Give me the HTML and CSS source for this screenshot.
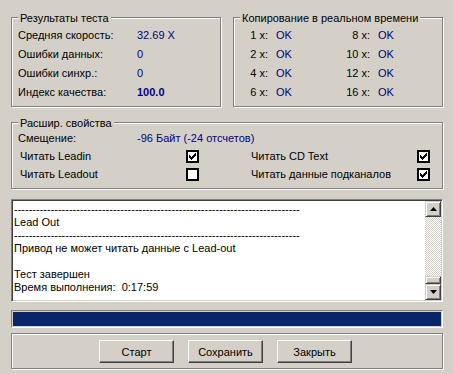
FILE: index.html
```html
<!DOCTYPE html>
<html lang="ru">
<head>
  <meta charset="UTF-8" />
  <title>Тест чтения</title>
  <link rel="stylesheet" href="styles.css">
</head>
<body>

<div class="dialog">
  <div class="top-row">
    <div class="group results">
      <div class="group-title">Результаты теста</div>
      <div class="result-grid">
        <span>Средняя скорость:</span><span class="value">32.69 X</span>
        <span>Ошибки данных:</span><span class="value">0</span>
        <span>Ошибки синхр.:</span><span class="value">0</span>
        <span>Индекс качества:</span><span class="value bold">100.0</span>
      </div>
    </div>

    <div class="group realtime">
      <div class="group-title">Копирование в реальном времени</div>
      <div class="speed-grid">
        <span class="speed">1 x:</span><span class="value">OK</span><span class="speed">8 x:</span><span class="value">OK</span>
        <span class="speed">2 x:</span><span class="value">OK</span><span class="speed">10 x:</span><span class="value">OK</span>
        <span class="speed">4 x:</span><span class="value">OK</span><span class="speed">12 x:</span><span class="value">OK</span>
        <span class="speed">6 x:</span><span class="value">OK</span><span class="speed">16 x:</span><span class="value">OK</span>
      </div>
    </div>
  </div>

  <div class="group extended">
    <div class="group-title">Расшир. свойства</div>
    <div class="offset-row">
      <span>Смещение:</span><span class="value">-96 Байт (-24 отсчетов)</span>
    </div>
    <div class="option-grid">
      <span>Читать Leadin</span>
      <svg class="check" width="13" height="13" viewBox="0 0 13 13" shape-rendering="crispEdges"><rect x="1" y="1" width="11" height="11" fill="#fff" stroke="#000" stroke-width="2"/><path d="M9 3h1v1h-1zM8 4h2v1h-2zM3 5h1v1h-1zM7 5h3v1h-3zM3 6h2v1h-2zM6 6h3v1h-3zM3 7h5v1h-5zM4 8h3v1h-3zM5 9h1v1h-1z"/></svg>
      <span>Читать CD Text</span>
      <svg class="check" width="13" height="13" viewBox="0 0 13 13" shape-rendering="crispEdges"><rect x="1" y="1" width="11" height="11" fill="#fff" stroke="#000" stroke-width="2"/><path d="M9 3h1v1h-1zM8 4h2v1h-2zM3 5h1v1h-1zM7 5h3v1h-3zM3 6h2v1h-2zM6 6h3v1h-3zM3 7h5v1h-5zM4 8h3v1h-3zM5 9h1v1h-1z"/></svg>

      <span>Читать Leadout</span>
      <svg class="check" width="13" height="13" viewBox="0 0 13 13" shape-rendering="crispEdges"><rect x="1" y="1" width="11" height="11" fill="#fff" stroke="#000" stroke-width="2"/></svg>
      <span>Читать данные подканалов</span>
      <svg class="check" width="13" height="13" viewBox="0 0 13 13" shape-rendering="crispEdges"><rect x="1" y="1" width="11" height="11" fill="#fff" stroke="#000" stroke-width="2"/><path d="M9 3h1v1h-1zM8 4h2v1h-2zM3 5h1v1h-1zM7 5h3v1h-3zM3 6h2v1h-2zM6 6h3v1h-3zM3 7h5v1h-5zM4 8h3v1h-3zM5 9h1v1h-1z"/></svg>
    </div>
  </div>

  <div class="log">
    <div class="log-text">------------------------------------------------------------------------------
Lead Out
------------------------------------------------------------------------------
Привод не может читать данные с Lead-out

Тест завершен
Время выполнения:  0:17:59</div>
    <div class="scrollbar">
      <div class="sb-btn"><svg width="7" height="4" viewBox="0 0 7 4"><polygon points="3.5,0 7,4 0,4"/></svg></div>
      <div class="sb-track"></div>
      <div class="sb-thumb"></div>
      <div class="sb-btn"><svg width="7" height="4" viewBox="0 0 7 4"><polygon points="0,0 7,0 3.5,4"/></svg></div>
    </div>
  </div>

  <div class="progress"><div class="progress-fill"></div></div>

  <div class="group buttons">
    <button>Старт</button>
    <button>Сохранить</button>
    <button>Закрыть</button>
  </div>
</div>

</body>
</html>
```

FILE: styles.css
```css
* {
  box-sizing: border-box;
}

body {
  margin: 0;
  background: #d4d0c8;
  font-family: "Liberation Sans", Arial, sans-serif;
  font-size: 11px;
  color: #000;
}

.dialog {
  width: 453px;
  height: 374px;
  padding: 17px 10px 0 11px;
  display: flex;
  flex-direction: column;
}

.top-row {
  display: flex;
  justify-content: space-between;
}

/* etched group box */
.group {
  position: relative;
  border: 1px solid #808080;
  box-shadow: inset 1px 1px #fff, 1px 1px #fff;
}

.group-title {
  position: absolute;
  top: -6px;
  left: 6px;
  padding: 0 2px;
  line-height: 13px;
  background: #d4d0c8;
  white-space: nowrap;
}

.value {
  color: #000080;
}

.bold {
  font-weight: bold;
}

.results,
.realtime {
  width: 210px;
  height: 90px;
  padding-top: 7px;
}

.result-grid {
  display: grid;
  grid-template-columns: 119px auto;
  grid-auto-rows: 19px;
  align-items: center;
  padding-left: 6px;
}

.speed-grid {
  display: grid;
  grid-template-columns: 42px 50px 52px auto;
  grid-auto-rows: 19px;
  align-items: center;
}

.speed {
  text-align: right;
  padding-right: 8px;
}

.extended {
  margin-top: 15px;
  height: 67px;
  padding: 5px 0 0 6px;
}

.offset-row {
  display: grid;
  grid-template-columns: 119px auto;
  height: 19px;
  align-items: center;
}

.option-grid {
  display: grid;
  grid-template-columns: 166px 65px 166px 13px;
  grid-auto-rows: 18px;
  align-items: center;
  padding-left: 2px;
}

.check {
  display: block;
}

/* sunken text box */
.log {
  margin-top: 10px;
  height: 103px;
  display: flex;
  padding: 1px;
  background: #fff;
  border: 1px solid;
  border-color: #808080 #fff #fff #808080;
  box-shadow: inset 1px 1px #404040, inset -1px -1px #d4d0c8;
}

.log-text {
  flex: 1;
  padding: 2px 0 0 1px;
  line-height: 13px;
  white-space: pre;
  overflow: hidden;
}

.scrollbar {
  width: 16px;
  display: flex;
  flex-direction: column;
}

.sb-btn,
.sb-thumb {
  background: #d4d0c8;
  border: 1px solid;
  border-color: #d4d0c8 #404040 #404040 #d4d0c8;
  box-shadow: inset 1px 1px #fff, inset -1px -1px #808080;
}

.sb-btn {
  height: 16px;
  display: flex;
  align-items: center;
  justify-content: center;
}

.sb-btn svg {
  display: block;
}

.sb-thumb {
  height: 8px;
}

.sb-track {
  flex: 1;
  background-image: conic-gradient(#fff 0 25%, #d4d0c8 0 50%, #fff 0 75%, #d4d0c8 0);
  background-size: 2px 2px;
}

.progress {
  margin-top: 8px;
  height: 18px;
  padding: 1px;
  border: 1px solid;
  border-color: #808080 #fff #fff #808080;
}

.progress-fill {
  height: 100%;
  background: #0a246a;
}

.buttons {
  margin-top: 5px;
  height: 36px;
  display: flex;
  gap: 14px;
  padding: 6px 0 0 87px;
}

.buttons button {
  width: 75px;
  height: 23px;
  padding: 0;
  font: inherit;
  color: #000;
  background: #d4d0c8;
  border: 1px solid;
  border-color: #fff #404040 #404040 #fff;
  box-shadow: inset -1px -1px #808080;
}
```
